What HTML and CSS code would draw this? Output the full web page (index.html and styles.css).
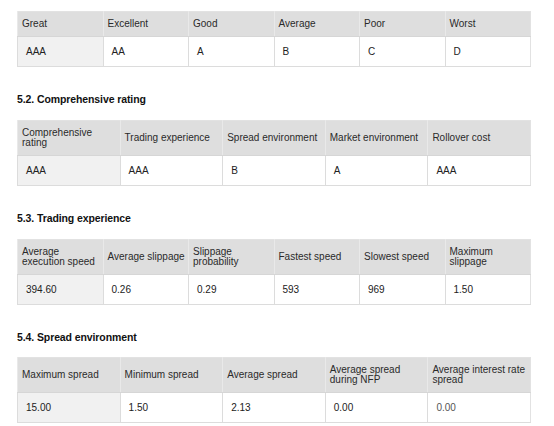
FILE: index.html
```html
<!DOCTYPE html>
<html>
<head>
<meta charset="utf-8">
<link rel="stylesheet" href="styles.css">
</head>
<body>
<div class="page">
  <table class="grid six">
    <thead>
      <tr><th>Great</th><th>Excellent</th><th>Good</th><th>Average</th><th>Poor</th><th>Worst</th></tr>
    </thead>
    <tbody>
      <tr><td>AAA</td><td>AA</td><td>A</td><td>B</td><td>C</td><td>D</td></tr>
    </tbody>
  </table>

  <h2 class="section">5.2. Comprehensive rating</h2>
  <table class="grid five">
    <thead>
      <tr><th>Comprehensive rating</th><th>Trading experience</th><th>Spread environment</th><th>Market environment</th><th>Rollover cost</th></tr>
    </thead>
    <tbody>
      <tr><td>AAA</td><td>AAA</td><td>B</td><td>A</td><td>AAA</td></tr>
    </tbody>
  </table>

  <h2 class="section">5.3. Trading experience</h2>
  <table class="grid six">
    <thead>
      <tr><th>Average execution speed</th><th>Average slippage</th><th>Slippage probability</th><th>Fastest speed</th><th>Slowest speed</th><th>Maximum slippage</th></tr>
    </thead>
    <tbody>
      <tr><td>394.60</td><td>0.26</td><td>0.29</td><td>593</td><td>969</td><td>1.50</td></tr>
    </tbody>
  </table>

  <h2 class="section last">5.4. Spread environment</h2>
  <table class="grid five">
    <thead>
      <tr><th>Maximum spread</th><th>Minimum spread</th><th>Average spread</th><th>Average spread during NFP</th><th>Average interest rate spread</th></tr>
    </thead>
    <tbody>
      <tr><td>15.00</td><td>1.50</td><td>2.13</td><td>0.00</td><td class="faded">0.00</td></tr>
    </tbody>
  </table>
</div>
</body>
</html>
```

FILE: styles.css
```css
html, body {
  margin: 0;
  padding: 0;
  background: #ffffff;
}

.page {
  padding: 11px 0 0 17px;
  width: 514px;
  font-family: "Liberation Sans", Arial, sans-serif;
  color: #222222;
}

.grid {
  width: 514px;
  table-layout: fixed;
  border-collapse: collapse;
  font-size: 10px;
  border: 1px solid #e2e2e2;
}

.grid th {
  background: #dedede;
  font-weight: normal;
  text-align: left;
  vertical-align: middle;
  padding: 7px 2px 7px 4px;
  line-height: 10px;
  border-left: 1px solid #e9e9e9;
  border-bottom: 1px solid #d6d6d6;
  color: #2a2a2a;
}

.grid td {
  background: #ffffff;
  padding: 10px 8px 9px 8px;
  line-height: 10px;
  border-left: 1px solid #dcdcdc;
  border-bottom: 1px solid #dcdcdc;
  color: #222222;
}

.grid td:first-child {
  background: #f1f1f1;
}

.grid td.faded {
  color: #555555;
}

.section {
  margin: 25px 0 14px 0;
  font-size: 10.5px;
  line-height: 14px;
  font-weight: bold;
  color: #111111;
  letter-spacing: -0.1px;
}

.section.last {
  margin-bottom: 13px;
}
```
